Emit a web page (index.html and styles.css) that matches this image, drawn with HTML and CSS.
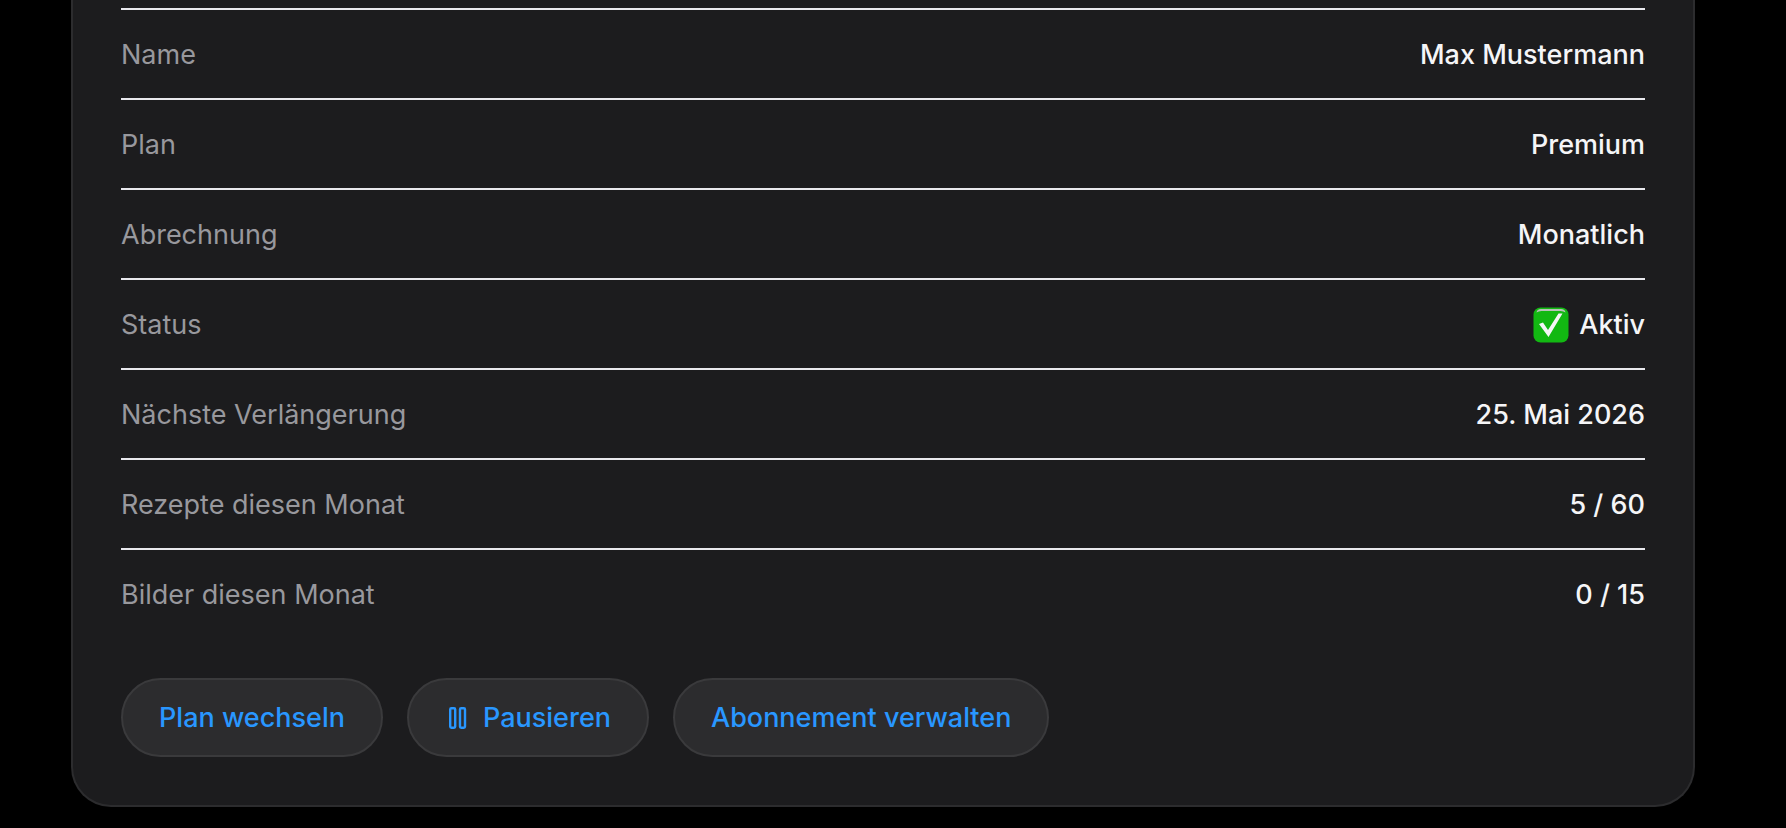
FILE: index.html
```
<!DOCTYPE html>
<html lang="de">

<head>
    <meta charset="UTF-8">
    <meta name="viewport" content="width=device-width, initial-scale=1.0">
    <title>Abonnement</title>
    <link rel="stylesheet" href="styles.css">
</head>

<body>
    <main class="card">
        <!-- Subscription details -->
        <table class="details">
            <tbody>
                <tr>
                    <th scope="row">Name</th>
                    <td>Max Mustermann</td>
                </tr>
                <tr>
                    <th scope="row">Plan</th>
                    <td>Premium</td>
                </tr>
                <tr>
                    <th scope="row">Abrechnung</th>
                    <td>Monatlich</td>
                </tr>
                <tr>
                    <th scope="row">Status</th>
                    <td>
                        <span class="status">
                            <svg class="check-icon" viewBox="0 0 36 36" aria-hidden="true">
                                <rect x="0.5" y="0.5" width="35" height="35" rx="7" fill="#12b812" />
                                <path d="M3.500 5.500Q4 2 8 2H28Q32 2 32.500 5.500Q30.500 4 27.500 4H8.500Q5.500 4 3.500 5.500Z" fill="#b9c2b9" />
                                <path d="M6 17L10 15.500L15 23L25.500 6.500H29.500L15.500 30Z" fill="#f5f5f7" />
                            </svg>
                            Aktiv
                        </span>
                    </td>
                </tr>
                <tr>
                    <th scope="row">Nächste Verlängerung</th>
                    <td>25. Mai 2026</td>
                </tr>
                <tr>
                    <th scope="row">Rezepte diesen Monat</th>
                    <td>5 / 60</td>
                </tr>
                <tr>
                    <th scope="row">Bilder diesen Monat</th>
                    <td>0 / 15</td>
                </tr>
            </tbody>
        </table>

        <!-- Actions -->
        <div class="actions">
            <button type="button" class="btn">Plan wechseln</button>
            <button type="button" class="btn">
                <svg class="pause-icon" viewBox="0 0 18 22" aria-hidden="true">
                    <rect x="1.2" y="1.2" width="5" height="19.6" rx="1.2" />
                    <rect x="11" y="1.2" width="5" height="19.6" rx="1.2" />
                </svg>
                Pausieren
            </button>
            <button type="button" class="btn">Abonnement verwalten</button>
        </div>
    </main>
</body>

</html>
```
FILE: styles.css
```
/* Reset CSS */
* {
    box-sizing: border-box;
    margin: 0;
    padding: 0;
}

/* Global Styles */
body {
    font-family: Inter, "Liberation Sans", sans-serif;
    font-size: 27px;
    line-height: 40px;
    background-color: #000;
    color: #f5f5f7;
}

.card {
    margin: 0 91px 20px 71px;
    padding: 8px 48px 48px;
    background-color: #1c1c1e;
    border: 2px solid #2c2c2e;
    border-top: none;
    border-radius: 0 0 40px 40px;
}

/* Details */
.details {
    width: 100%;
    border-spacing: 0;
    border-top: 2px solid #e8e8ed;
}

.details th,
.details td {
    padding: 25px 0 23px;
    border-bottom: 2px solid #e8e8ed;
}

.details tr:last-child th,
.details tr:last-child td {
    border-bottom: none;
}

.details th {
    color: #98989d;
    font-weight: 400;
    text-align: left;
}

.details td {
    font-weight: 500;
    text-align: right;
}

.status {
    display: flex;
    align-items: center;
    justify-content: flex-end;
    gap: 10px;
}

.check-icon {
    width: 36px;
    height: 36px;
}

/* Buttons */
.actions {
    display: flex;
    flex-wrap: wrap;
    gap: 24px;
    margin-top: 40px;
}

.btn {
    display: flex;
    align-items: center;
    padding: 18px 36px;
    font-family: inherit;
    font-size: 27px;
    font-weight: 500;
    line-height: 39px;
    color: #2997ff;
    background-color: #2c2c2e;
    border: 2px solid #3a3a3c;
    border-radius: 40px;
    cursor: pointer;
}

.pause-icon {
    width: 18px;
    height: 22px;
    margin: 0 16px 0 4px;
    fill: none;
    stroke: currentColor;
    stroke-width: 2.4;
}

/* Adjustments for small screens */
@media only screen and (max-width: 768px) {
    .card {
        margin: 0 12px 20px;
        padding: 8px 20px 24px;
    }
}
```
